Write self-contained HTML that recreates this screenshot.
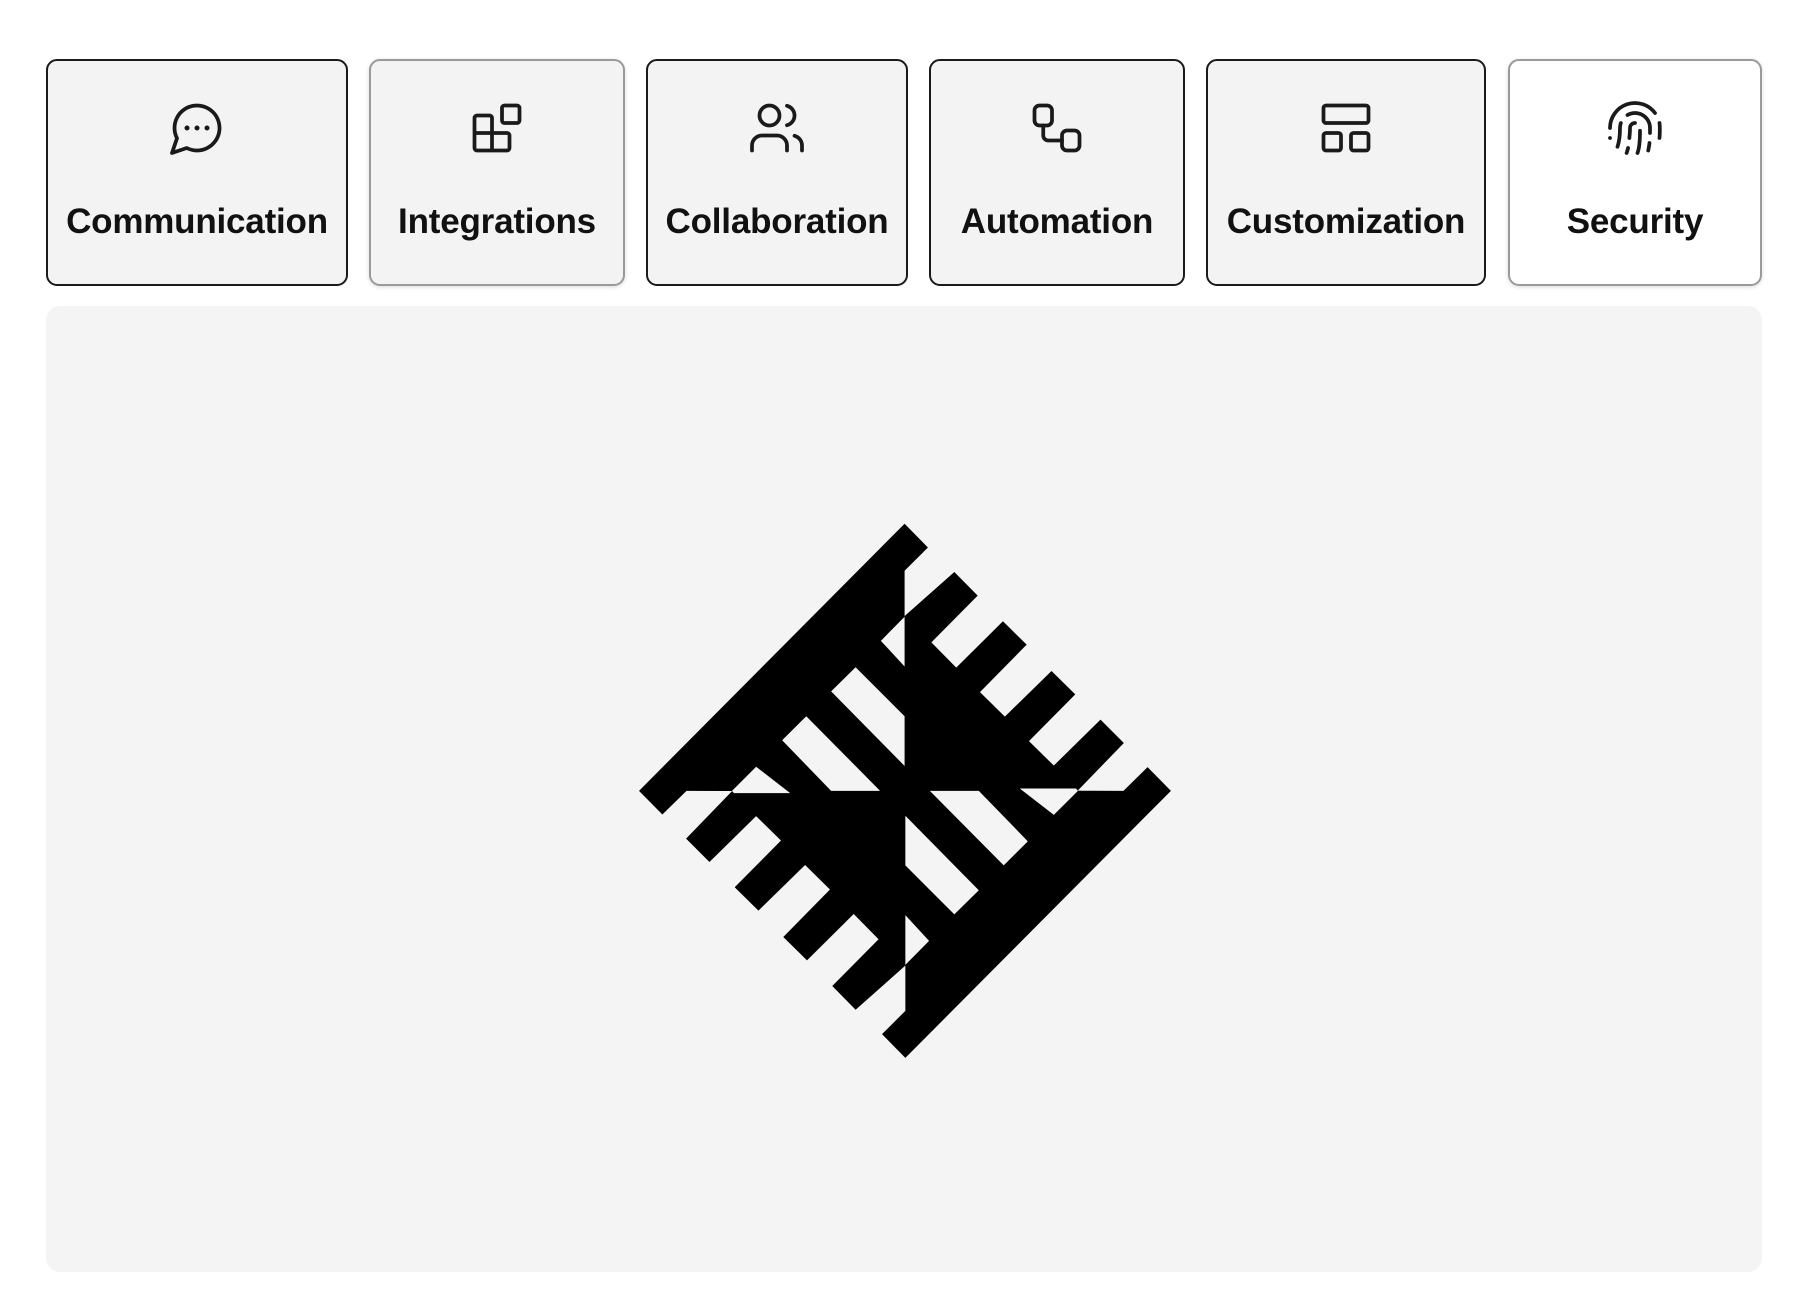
<!DOCTYPE html>
<html><head><meta charset="utf-8"><style>
*{margin:0;padding:0;box-sizing:border-box}
html,body{width:1802px;height:1314px;background:#fff;overflow:hidden;font-family:"Liberation Sans",sans-serif}
.card{position:absolute;top:59px;height:227px;background:#f3f3f3;border:2px solid #1a1a1a;border-radius:11px}
.card svg{position:absolute;left:50%;top:37px;margin-left:-30px;width:60px;height:60px;fill:none;stroke:#1a1a1a;stroke-width:1.5;stroke-linecap:round;stroke-linejoin:round}
.card span{position:absolute;left:0;right:0;top:141px;text-align:center;font-size:35px;font-weight:700;color:#111;letter-spacing:-0.2px}
.soft{border-color:#9a9a9a;box-shadow:0 1px 4px rgba(0,0,0,.15)}
.panel{position:absolute;left:46px;top:306px;width:1716px;height:966px;background:#f4f4f4;border-radius:14px}
</style></head><body>
<div class="card" style="left:46px;width:302px"><svg viewBox="0 0 24 24"><path d="M7.9 20A9 9 0 1 0 4 16.1L2 22Z"/><path d="M8 12h.01M12 12h.01M16 12h.01" stroke-width="2"/></svg><span>Communication</span></div>
<div class="card soft" style="left:369px;width:256px"><svg viewBox="0 0 24 24"><rect x="14" y="3" width="7" height="7" rx="1"/><path d="M10 21V8a1 1 0 0 0-1-1H4a1 1 0 0 0-1 1v12a1 1 0 0 0 1 1h12a1 1 0 0 0 1-1v-5a1 1 0 0 0-1-1H3"/></svg><span>Integrations</span></div>
<div class="card" style="left:646px;width:262px"><svg viewBox="0 0 24 24"><path d="M16 21v-2a4 4 0 0 0-4-4H6a4 4 0 0 0-4 4v2"/><circle cx="9" cy="7" r="4"/><path d="M22 21v-2a4 4 0 0 0-3-3.87M16 3.13a4 4 0 0 1 0 7.75"/></svg><span>Collaboration</span></div>
<div class="card" style="left:929px;width:256px"><svg viewBox="0 0 24 24"><rect x="3" y="3" width="7" height="8" rx="2"/><rect x="14" y="13" width="7" height="8" rx="2"/><path d="M6.5 11v4a2 2 0 0 0 2 2H14"/></svg><span>Automation</span></div>
<div class="card" style="left:1206px;width:280px"><svg viewBox="0 0 24 24"><rect x="3" y="3" width="18" height="7" rx="1"/><rect x="3" y="14" width="7" height="7" rx="1"/><rect x="14" y="14" width="7" height="7" rx="1"/></svg><span>Customization</span></div>
<div class="card soft" style="left:1508px;width:254px;background:#fff"><svg viewBox="0 0 24 24"><path d="M12 10a2 2 0 0 0-2 2c0 1.02-.1 2.51-.26 4"/><path d="M14 13.12c0 2.38 0 6.38-1 8.88"/><path d="M17.29 21.02c.12-.6.43-2.3.5-3.02"/><path d="M2 12a10 10 0 0 1 18-6"/><path d="M2 16h.01"/><path d="M21.8 16c.2-2 .131-5.354 0-6"/><path d="M5 19.5C5.5 18 6 15 6 12a6 6 0 0 1 .34-2"/><path d="M8.65 22c.21-.66.45-1.32.57-2"/><path d="M9 6.8a6 6 0 0 1 9 5.2v2"/></svg><span>Security</span></div>
<div class="panel"></div>
<svg style="position:absolute;left:600px;top:500px;width:600px;height:600px" viewBox="0 0 1568 1568">
<defs><g id="h">
<polygon fill="#000" points="796,62 857,124 796,185 796,762 226,760 163,822 102,760"/>
<polygon fill="#000" points="794,305 926,188 987,250 866,372 931,438 1053,317 1115,378 993,502 1058,566 1180,447 1242,508 1121,630 1186,694 1308,574 1369,635 1246,762 794,762"/>
</g><g id="w" fill="#f4f4f4">
<polygon points="668,437 796,565 796,695 604,500"/>
<polygon points="539,565 732,760 604,760 476,628"/>
<polygon points="345,760 408,697 497,766 350,766"/>
<polygon points="734,368 796,305 796,435"/>
</g></defs>
<use href="#h"/><use href="#h" transform="rotate(180 797 760)"/>
<use href="#w"/><use href="#w" transform="rotate(180 797 760)"/>
</svg>
</body></html>
